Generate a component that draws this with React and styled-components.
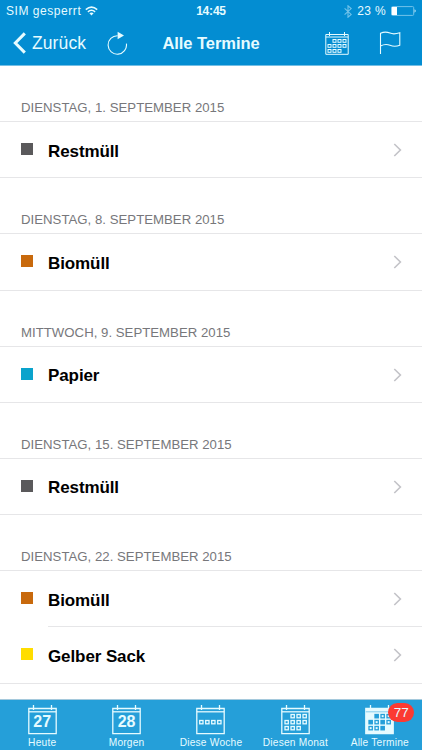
import React from 'react';
import styled, { createGlobalStyle } from 'styled-components';

const colors = {
    nav: '#038dd2',
    tabs: '#259fd9',
    ice: '#e6fbff',
    line: '#e6e6e8',
    heading: '#77777b',
    chevron: '#c3c3c8',
    badge: '#fb3a32',
    grey: '#5a595b',
    brown: '#c8690c',
    cyan: '#0aa3cc',
    yellow: '#ffdd00'
}

const GlobalStyle = createGlobalStyle`
    * { box-sizing: border-box; }
    body {
        margin: 0;
        background: #fff;
        font-family: "Liberation Sans", Arial, sans-serif;
    }
    svg { display: block; flex: none; }
`

const Screen = styled.div`
    display: flex;
    flex-direction: column;
    width: 422px;
    height: 750px;
    overflow: hidden;
    background: #fff;
`

const Header = styled.header`
    flex: none;
    height: 66px;
    background: ${colors.nav};
    border-bottom: 1px solid #74bfe5;
    color: ${colors.ice};
`

const StatusBar = styled.div`
    display: grid;
    grid-template-columns: 1fr auto 1fr;
    align-items: center;
    height: 22px;
    padding: 0 6px;
    font-size: 12px;
    white-space: pre;
`

const StatusGroup = styled.div`
    display: flex;
    align-items: center;
    justify-content: ${({ $end }) => ($end ? 'flex-end' : 'flex-start')};
    gap: ${({ $end }) => ($end ? '5px' : '4px')};
    letter-spacing: ${({ $end }) => ($end ? '0.35px' : '0.55px')};
`

const Clock = styled.div`
    font-weight: bold;
    letter-spacing: -0.2px;
`

const NavBar = styled.div`
    display: grid;
    grid-template-columns: 1fr auto 1fr;
    align-items: center;
    height: 42px;
    padding: 0 21px 0 13px;
`

const NavGroup = styled.div`
    display: flex;
    align-items: center;
    justify-content: ${({ $end }) => ($end ? 'flex-end' : 'flex-start')};
    gap: ${({ $gap }) => $gap}px;
`

const BackLabel = styled.span`
    font-size: 17.5px;
    line-height: 22px;
    letter-spacing: 0.1px;
`

const Title = styled.h1`
    margin: 0 0 0 8px;
    font-size: 16.5px;
    line-height: 22px;
    font-weight: bold;
    letter-spacing: -0.05px;
`

const List = styled.main`
    flex: 1;
    min-height: 0;
    overflow: hidden;
`

const SectionHeading = styled.h2`
    height: 56px;
    margin: 0;
    padding: 34px 0 0 21px;
    font-size: 13.2px;
    line-height: 16px;
    font-weight: normal;
    letter-spacing: 0.02px;
    color: ${colors.heading};
    border-bottom: 1px solid ${colors.line};
`

const Row = styled.div`
    display: flex;
    height: 56.25px;
    padding-left: 21px;
`

const Swatch = styled.span`
    flex: none;
    width: 12px;
    height: 12px;
    margin: 21px 15px 0 0;
    background: ${({ $color }) => $color};
`

const RowBody = styled.div`
    flex: 1;
    display: flex;
    align-items: center;
    justify-content: space-between;
    padding: 1px 20px 0 0;
    border-bottom: 1px solid ${colors.line};
`

const LastRow = styled(Row)`
    border-bottom: 1px solid ${colors.line};

    ${RowBody} {
        border-bottom: 1px solid transparent;
        margin-bottom: -1px;
    }
`

const RowLabel = styled.span`
    padding-top: 3px;
    font-size: 17px;
    line-height: 22px;
    font-weight: bold;
    letter-spacing: -0.1px;
    color: #000;
`

const TabBar = styled.nav`
    flex: none;
    display: grid;
    grid-template-columns: repeat(5, 1fr);
    height: 51px;
    background: ${colors.tabs};
    border-top: 1px solid #a5c9dc;
    color: ${colors.ice};
`

const Tab = styled.div`
    display: flex;
    flex-direction: column;
    align-items: center;
    padding-top: 5px;
`

const TabIcon = styled.div`
    position: relative;
    height: 30px;
`

const TabLabel = styled.span`
    margin-top: 2px;
    font-size: 10.2px;
    line-height: 12px;
    letter-spacing: 0.2px;
    white-space: nowrap;
`

const DayNumber = styled.span`
    position: absolute;
    top: 8px;
    left: 0;
    width: 100%;
    text-align: center;
    font-size: 16px;
    line-height: 18px;
    font-weight: bold;
`

const Badge = styled.span`
    position: absolute;
    top: -2px;
    left: 23px;
    width: 26px;
    height: 19px;
    border-radius: 10px;
    background: ${colors.badge};
    font-size: 13.5px;
    line-height: 19px;
    text-align: center;
`

const WifiIcon = () => (
    <svg width="13" height="10" viewBox="0 0 13 10" fill="none" stroke={colors.ice} strokeWidth="1.6">
        <path d="M0.8 3.6Q6.5 -1.4 12.2 3.6" />
        <path d="M2.9 5.8Q6.5 2.7 10.1 5.8" />
        <path d="M4.4 7.2Q6.5 5.6 8.6 7.2L6.5 9.4Z" fill={colors.ice} stroke="none" />
    </svg>
)

const BluetoothIcon = () => (
    <svg width="8" height="13" viewBox="0 0 8 13" fill="none" stroke="#72c3ea" strokeWidth="1.1">
        <path d="M0.6 3.4L7.2 9.4L4 12.2V0.8L7.2 3.6L0.6 9.6" />
    </svg>
)

const BatteryIcon = () => (
    <svg width="25" height="10" viewBox="0 0 25 10">
        <rect x="0.5" y="0.6" width="22.2" height="8.8" rx="1" fill="none" stroke="#72c3ea" strokeWidth="1" />
        <rect x="0.8" y="1" width="5.2" height="8" fill="#fff" />
        <path d="M23.6 3.3Q25.6 5 23.6 6.7Z" fill={colors.ice} />
    </svg>
)

const BackIcon = () => (
    <svg width="13" height="22" viewBox="0 0 13 22" fill="none" stroke={colors.ice} strokeWidth="3">
        <path d="M11.8 1.4L2.3 11L11.8 20.6" />
    </svg>
)

const ReloadIcon = () => (
    <svg width="21" height="24" viewBox="0 0 21 24">
        <path d="M10.6 4.8A9.2 9.2 0 1 0 19.4 12.6" fill="none" stroke={colors.ice} strokeWidth="1.1" />
        <path d="M10.6 0.8L17 4.6L10.6 8.2Z" fill={colors.ice} />
    </svg>
)

const MonthIcon = () => (
    <svg width="24" height="23" viewBox="0 0 24 23" fill="none" stroke={colors.ice} strokeWidth="1">
        <path d="M0.8 2.5H23.2V22.3H0.8ZM0.8 5H23.2M4.5 0V4M19.5 0V4" />
        {[[8, 7.5], [13, 7.5], [18, 7.5], [3, 12.5], [8, 12.5], [13, 12.5], [18, 12.5], [3, 17.5], [8, 17.5], [13, 17.5]].map(([x, y]) =>
            <rect key={`${x}-${y}`} x={x} y={y} width="3" height="2.8" />
        )}
    </svg>
)

const FlagIcon = () => (
    <svg width="22" height="24" viewBox="0 0 22 24" fill="none" stroke={colors.ice} strokeWidth="1.1">
        <path d="M1.5 23V2.3C5 0.6 8.2 0.9 11 2.1C14 3.4 17 3 20.8 1.8V14.2C17 15.8 14 15.6 11 14.3C8 13.1 5 13.2 1.5 15" />
    </svg>
)

const ChevronIcon = () => (
    <svg width="9" height="14" viewBox="0 0 9 14" fill="none" stroke={colors.chevron} strokeWidth="1.6">
        <path d="M1.3 1L7.4 7L1.3 13" />
    </svg>
)

const monthCells = [
    [10, 9.5], [16, 9.5], [22, 9.5],
    [4, 15.5], [10, 15.5], [16, 15.5], [22, 15.5],
    [4, 21.5], [10, 21.5], [16, 21.5]
]

const weekCells = [[3.7, 15.5], [9.7, 15.5], [15.7, 15.5], [21.7, 15.5]]

const CalendarIcon = ({ cells = [], filled }) => (
    <svg width="29" height="30" viewBox="0 0 29 30" fill="none" stroke={colors.ice} strokeWidth="1.3">
        <path d="M0.8 3.5H28.2V28.7H0.8Z" fill={filled ? colors.ice : 'none'} />
        <path d="M5.5 0V5M23.5 0V5" />
        <path
            d="M0.8 6.8H28.2"
            stroke={filled ? colors.tabs : colors.ice}
            strokeWidth={filled ? 0.5 : 1.3}
        />
        {cells.map(([x, y], i) =>
            <rect
                key={`${x}-${y}`}
                x={x}
                y={y}
                width="3.3"
                height="3.3"
                stroke={filled ? colors.tabs : colors.ice}
                fill={filled && [0, 3, 5, 9].includes(i) ? colors.tabs : 'none'}
            />
        )}
    </svg>
)

const sections = [
    { date: 'DIENSTAG, 1. SEPTEMBER 2015', items: [['Restmüll', colors.grey]] },
    { date: 'DIENSTAG, 8. SEPTEMBER 2015', items: [['Biomüll', colors.brown]] },
    { date: 'MITTWOCH, 9. SEPTEMBER 2015', items: [['Papier', colors.cyan]] },
    { date: 'DIENSTAG, 15. SEPTEMBER 2015', items: [['Restmüll', colors.grey]] },
    { date: 'DIENSTAG, 22. SEPTEMBER 2015', items: [['Biomüll', colors.brown], ['Gelber Sack', colors.yellow]] }
]

const tabs = [
    { label: 'Heute', day: 27 },
    { label: 'Morgen', day: 28 },
    { label: 'Diese Woche', cells: weekCells },
    { label: 'Diesen Monat', cells: monthCells },
    { label: 'Alle Termine', cells: monthCells, filled: true, badge: 77 }
]

const Section = ({ date, items }) => (
    <section>
        <SectionHeading>{date}</SectionHeading>
        {items.map(([label, color], i) => {
            const Item = i === items.length - 1 ? LastRow : Row;
            return (
                <Item key={label}>
                    <Swatch $color={color} />
                    <RowBody>
                        <RowLabel>{label}</RowLabel>
                        <ChevronIcon />
                    </RowBody>
                </Item>
            )
        })}
    </section>
)

const App = () => (
    <Screen>
        <GlobalStyle />
        <Header>
            <StatusBar>
                <StatusGroup>
                    <span>SIM gesperrt</span>
                    <WifiIcon />
                </StatusGroup>
                <Clock>14:45</Clock>
                <StatusGroup $end>
                    <BluetoothIcon />
                    <span>23 %</span>
                    <BatteryIcon />
                </StatusGroup>
            </StatusBar>
            <NavBar>
                <NavGroup $gap={21}>
                    <NavGroup $gap={6}>
                        <BackIcon />
                        <BackLabel>Zurück</BackLabel>
                    </NavGroup>
                    <ReloadIcon />
                </NavGroup>
                <Title>Alle Termine</Title>
                <NavGroup $end $gap={30}>
                    <MonthIcon />
                    <FlagIcon />
                </NavGroup>
            </NavBar>
        </Header>
        <List>
            {sections.map((section) =>
                <Section key={section.date} {...section} />
            )}
        </List>
        <TabBar>
            {tabs.map(({ label, day, cells, filled, badge }) =>
                <Tab key={label}>
                    <TabIcon>
                        <CalendarIcon cells={cells} filled={filled} />
                        {day && <DayNumber>{day}</DayNumber>}
                        {badge && <Badge>{badge}</Badge>}
                    </TabIcon>
                    <TabLabel>{label}</TabLabel>
                </Tab>
            )}
        </TabBar>
    </Screen>
)

export default App;
